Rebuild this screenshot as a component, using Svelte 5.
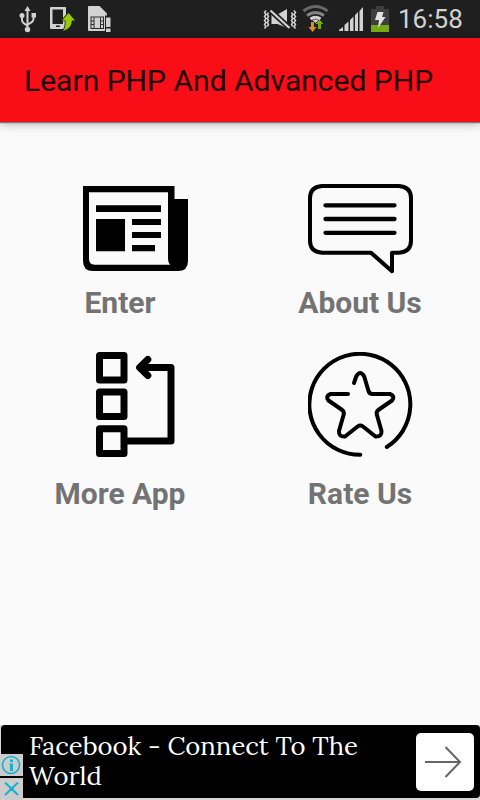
<script>
  const items = [
    { id: 'enter', label: 'Enter' },
    { id: 'about', label: 'About Us' },
    { id: 'more', label: 'More App' },
    { id: 'rate', label: 'Rate Us' }
  ];
</script>

<div class="screen">
  <div class="status">
    <svg class="left" width="120" height="38" viewBox="0 0 120 38">
      <g fill="none" stroke="#d2d2d2" stroke-width="2">
        <path d="M27.500 10V29M22 16v4q0 3 5.500 5.500M33.500 15v4q0 3-6 5.500" />
      </g>
      <g fill="#d2d2d2">
        <path d="M27.500 6l3 5h-6z" /><circle cx="22" cy="15.500" r="2.500" />
        <rect x="31.500" y="13" width="4.500" height="4.500" /><circle cx="27.500" cy="29.500" r="2.700" />
        <path fill-rule="evenodd" d="M51 7h14q1 0 1 1v20q0 1-1 1H51q-1 0-1-1V8q0-1 1-1zM52.500 9.500v14.500h10.500V9.500zM56 25.500v1.500h4v-1.500z" />
        <path d="M89 6h10.500l7.500 7.500V31H89q-1 0-1-1V7q0-1 1-1z" />
      </g>
      <path d="M90.500 16.500h13.500v12.500h-13.500z" fill="#2b2b2b" />
      <path d="M91.500 17.500h11.500v10.500h-11.500z" fill="#d2d2d2" />
      <path d="M94 17.500v10.500M100.500 17.500v10.500M91 21h3M91 24.500h3M100 21h3M100 24.500h3" stroke="#2b2b2b" stroke-width="1" />
      <path d="M105 15.500h6.500V33H105z" fill="#1f1f1f" />
      <path d="M106 17.500h4.500V27H106zM106 28.500h4.500V32H106z" fill="#d2d2d2" />
      <path d="M68.500 13l6.500 7.500h-3.200q0 8-8.800 10.500q3-4 2.500-10.500H62z" fill="#99cc00" stroke="#1f1f1f" stroke-width="1.600" paint-order="stroke" />
    </svg>
    <div class="right">
      <svg width="130" height="38" viewBox="262 0 130 38">
        <g fill="none" stroke="#d2d2d2" stroke-width="1.500">
          <path d="M266 10.500l-1.500 2 1.500 2-1.500 2 1.500 2-1.500 2 1.500 2-1.500 2 1.500 2-1.500 2M268.500 12.500l-1.200 2 1.200 2-1.200 2 1.200 2-1.200 2 1.200 2-1.200 2M294 10.500l1.500 2-1.500 2 1.500 2-1.500 2 1.500 2-1.500 2 1.500 2-1.500 2 1.500 2M291.500 12.500l1.200 2-1.200 2 1.200 2-1.200 2 1.200 2-1.200 2 1.200 2" />
        </g>
        <path d="M271.500 14.500h6l9.500-5.500v19l-9.500-4h-6z" fill="#d2d2d2" />
        <path d="M270.500 10.500l19 17.500" stroke="#1f1f1f" stroke-width="5.500" />
        <path d="M270.500 10.500l19 17.500" stroke="#d2d2d2" stroke-width="2.200" />
        <g fill="none" stroke-width="3">
          <path d="M303.500 11q12-9 24 0" stroke="#696969" /><path d="M307 15.500q8.500-6 17 0" stroke="#858585" />
          <path d="M310.500 19q5-3.500 10 0" stroke="#d2d2d2" />
        </g>
        <path d="M312 19.500h7L315.500 23z" fill="#d2d2d2" />
        <path d="M311 22h3v5h2.500l-4 5-4-5h2.500z" fill="#e08a2c" /><path d="M318 29h3v-5h2.500l-4-4.500-4 4.500h2.500z" fill="#72aa18" />
        <path d="M339 31v-1l4-3v4zM344.500 31v-6l4-3.500V31zM350 31V20l3.500-3.500V31zM355 31V15l3-3v19zM359.500 31V11l3.500-4v24z" fill="#d2d2d2" />
        <path d="M371 9h5V6h8v3h5v16h-18z" fill="#3e3e3e" /><path d="M371 25h18v7h-18z" fill="#76aa15" />
        <path d="M377.500 12h6l-1.500 5h3.500l-7.500 11 1-8h-4z" fill="#e2e2e2" />
      </svg>
      <span class="time">16:58</span>
    </div>
  </div>
  <header><h1>Learn PHP And Advanced PHP</h1></header>
  <main>
    {#each items as item}
      <button class="item {item.id}">
        {#if item.id === 'enter'}
          <svg viewBox="83 177 105 105">
            <path fill-rule="evenodd" d="M83 186h91.500v13H188v62q0 10-10 10H93q-10 0-10-10zM89 192.300V259q0 5.700 5.700 5.700H170q-2-2-2-5.700v-66.700z" />
            <path d="M96 205.300h65v6.700H96zM96 219h29v32.300H96zM132 219h29v6h-29zM132 232h29v6h-29zM132 245h23v6.300h-23z" />
          </svg>
        {:else if item.id === 'about'}
          <svg viewBox="308 177 105 105">
            <path class="stroke" stroke-width="4" d="M371 252.700H322q-12-1-12-12V198q0-11 12-12h77q12 1 12 12v42.700q0 11-12 12h-7v18.500z" />
            <path class="stroke" stroke-width="4.300" d="M325.500 205.300h69M325.500 219h69M325.500 232.800h69" />
          </svg>
        {:else if item.id === 'more'}
          <svg viewBox="83 352 105 105">
            <path class="stroke" stroke-width="7" d="M99.500 355.500H124V380H99.500zM99.500 392H124v24.500H99.500zM99.500 428.700H124v24.800H99.500zM124 441h47v-73.500h-31M147.800 359.500l-8.200 8 8.200 8" />
          </svg>
        {:else}
          <svg viewBox="308 352 105 105">
            <g class="stroke" stroke-width="4">
              <path d="M360.300 454.800A50.500 50.500 0 1 1 386.800 447" />
              <path d="M354 383l2.200-6.500q4-7 8 0l4.300 14.500q1 3 4 3H390q5.500 2 2 6.500L379 409.500q-3 2-2.200 5l4.700 16.500q.5 6-6 5.500L363 426.500q-2.700-2-5.400 0L345 436.500q-6.500.5-6-5.500l4.700-16.500q.8-3-2.200-5L328.500 400.500q-3.500-4.500 2-6.500H348" />
            </g>
          </svg>
        {/if}
        <span>{item.label}</span>
      </button>
    {/each}
  </main>
  <footer>
    <div class="ad">
      <p>Facebook - Connect To The<br />World</p>
      <div class="go">
        <svg width="58" height="58" viewBox="0 0 58 58"><path d="M9 29h34M29.500 14l14.500 15-14.500 15" fill="none" stroke="#666" stroke-width="2" /></svg>
      </div>
    </div>
    <div class="badges">
      <svg width="23" height="22" viewBox="0 0 23 22"><circle cx="11" cy="11" r="8.500" fill="none" stroke="#16b0cf" stroke-width="1.600" /><path d="M10 5.500h3v2.500h-3zM9.500 9.500H13V17H10v-6h-.500z" fill="#16b0cf" /></svg>
      <svg width="23" height="22" viewBox="0 0 23 22"><path d="M5 4.500l13 12.500M18 4.500L5 17" stroke="#16b0cf" stroke-width="2" /><path d="M9.500 9h4v4h-4z" fill="#16b0cf" /></svg>
    </div>
  </footer>
</div>

<style>
  :global(body) { background: #fafafa; }
  .screen { width: 480px; height: 800px; display: flex; flex-direction: column; background: #fafafa; font-family: Roboto, "Liberation Sans", sans-serif; overflow: hidden; }
  svg { display: block; flex: none; }
  .status { height: 38px; flex: none; background: #1f1f1f; display: flex; justify-content: space-between; }
  .right { display: flex; align-items: center; padding-right: 16px; }
  .time { color: #d2d2d2; font-size: 26px; line-height: 38px; width: 66px; margin-left: 6px; white-space: nowrap; }
  header { height: 84px; flex: none; box-sizing: border-box; padding: 2px 0 0 24px; background: #f90d17; display: flex; align-items: center; box-shadow: 0 1px 1px #777, 0 2px 9px rgba(0, 0, 0, .3); }
  h1 { margin: 0; font-size: 30px; line-height: 36px; font-weight: 400; color: #210204; white-space: nowrap; letter-spacing: .02px; }
  main { flex: 1; display: grid; grid-template-columns: 240px 240px; grid-template-rows: 175px 190px; padding-top: 55px; align-content: start; }
  .item { border: 0; padding: 0; background: none; font: inherit; display: flex; flex-direction: column; align-items: center; }
  .item svg { width: 105px; height: 105px; }
  .enter svg, .more svg { margin-left: 31px; }
  .item span { font-size: 30px; line-height: 36px; font-weight: 700; color: #737373; margin-top: 3px; white-space: nowrap; }
  .more span, .rate span { margin-top: 19px; }
  .stroke { fill: none; stroke: #000; stroke-linecap: round; stroke-linejoin: round; }
  footer { height: 75px; flex: none; position: relative; background: #d8d8d8; }
  .ad { height: 73px; margin-left: 1px; background: #000; border-radius: 4px; display: flex; justify-content: space-between; align-items: center; box-sizing: border-box; padding: 0 6px 0 28px; }
  p { margin: 0 0 2px; color: #fff; font-family: Lora, "Liberation Serif", serif; font-size: 25.65px; line-height: 30px; white-space: nowrap; }
  .go { width: 58px; height: 58px; border-radius: 5px; background: #fff; }
  .badges { position: absolute; left: 0; bottom: 0; display: flex; flex-direction: column; gap: 2px; background: #000; }
  .badges svg { background: #ccc; }
</style>
